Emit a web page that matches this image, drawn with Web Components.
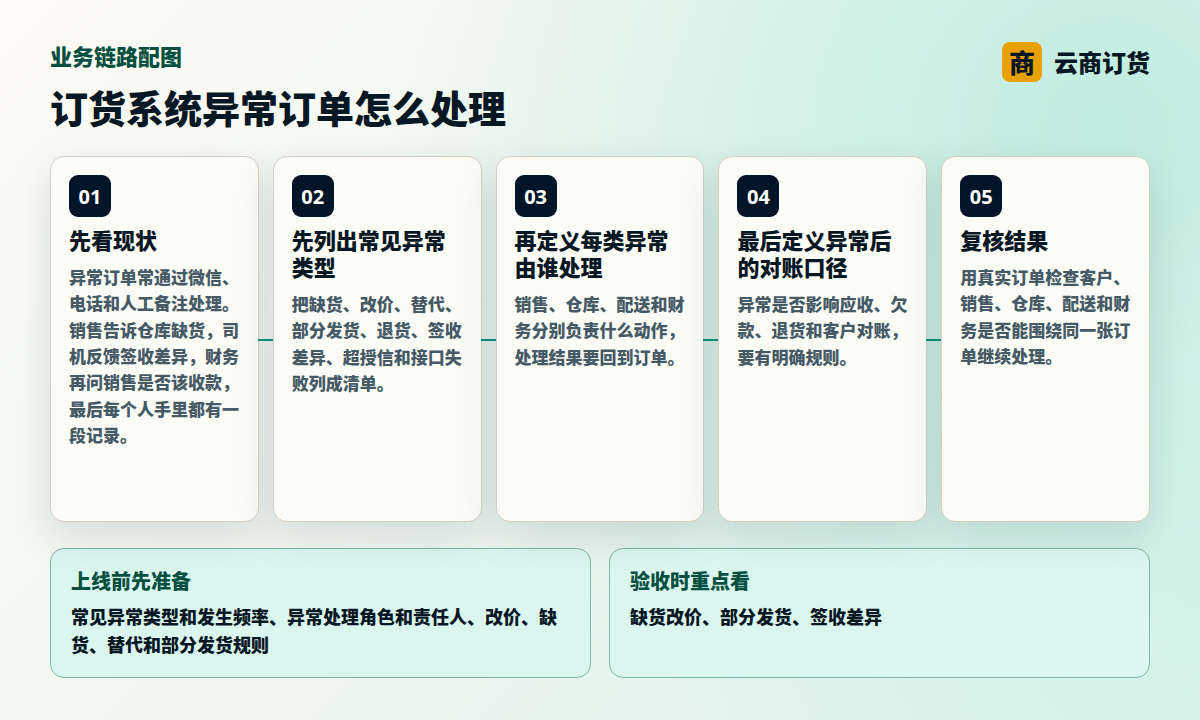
<!DOCTYPE html>
<html lang="zh-CN">
<head>
<meta charset="utf-8">
<title>订货系统异常订单怎么处理</title>
<style>
html, body { margin: 0; height: 100%; }
body { width: 1200px; height: 720px; overflow: hidden; font-family: "Open Sans", "Noto Sans CJK SC", sans-serif; }
</style>
</head>
<body>
<slide-page>
  <slide-header slot="header" label="业务链路配图" heading="订货系统异常订单怎么处理" brand="云商订货" mark="商"></slide-header>
  <step-card no="01" heading="先看现状" link>异常订单常通过微信、电话和人工备注处理。销售告诉仓库缺货，司机反馈签收差异，财务再问销售是否该收款，最后每个人手里都有一段记录。</step-card>
  <step-card no="02" heading="先列出常见异常类型" link>把缺货、改价、替代、部分发货、退货、签收差异、超授信和接口失败列成清单。</step-card>
  <step-card no="03" heading="再定义每类异常由谁处理" link>销售、仓库、配送和财务分别负责什么动作，处理结果要回到订单。</step-card>
  <step-card no="04" heading="最后定义异常后的对账口径" link>异常是否影响应收、欠款、退货和客户对账，要有明确规则。</step-card>
  <step-card no="05" heading="复核结果">用真实订单检查客户、销售、仓库、配送和财务是否能围绕同一张订单继续处理。</step-card>
  <note-card slot="notes" heading="上线前先准备">常见异常类型和发生频率、异常处理角色和责任人、改价、缺货、替代和部分发货规则</note-card>
  <note-card slot="notes" heading="验收时重点看">缺货改价、部分发货、签收差异</note-card>
</slide-page>
<script>
class SlidePage extends HTMLElement {
    constructor() {
        super();
        const shadow = this.attachShadow({ mode: "open" });
        shadow.innerHTML = `
        <style>
        :host {
            display: block;
            width: 1200px;
            height: 720px;
            box-sizing: border-box;
            padding: 40px 50px;
            background:
                radial-gradient(circle at 92% 18%, rgba(192, 236, 223, 1) 0, rgba(200, 238, 227, .75) 20%, rgba(220, 243, 236, 0) 58%),
                linear-gradient(135deg, #fdfbf5 0%, #eef6f1 50%, #d9f2ea 100%);
        }
        .steps { display: grid; grid-template-columns: repeat(5, 1fr); gap: 14px; height: 366px; }
        .notes { display: grid; grid-template-columns: 1fr 1fr; gap: 18px; height: 130px; margin-top: 26px; }
        </style>
        <slot name="header"></slot>
        <div class="steps"><slot></slot></div>
        <div class="notes"><slot name="notes"></slot></div>`;
    }
}

class SlideHeader extends HTMLElement {
    constructor() {
        super();
        const shadow = this.attachShadow({ mode: "open" });
        shadow.innerHTML = `
        <style>
        :host { display: flex; justify-content: space-between; align-items: flex-start; height: 116px; }
        .label { font-size: 22px; line-height: 32px; font-weight: 900; color: #07503f; }
        h1 { margin: 8px 0 0; font-size: 38px; line-height: 56px; font-weight: 900; color: #071723; }
        .brand { display: flex; align-items: center; gap: 12px; margin-top: 2px; font-size: 24px; font-weight: 900; color: #071723; }
        .name { padding-bottom: 2px; }
        .mark { width: 40px; height: 40px; border-radius: 8px; background: #e8a100; display: flex; align-items: center; justify-content: center; font-size: 26px; }
        </style>
        <div>
            <div class="label">${this.getAttribute("label")}</div>
            <h1>${this.getAttribute("heading")}</h1>
        </div>
        <div class="brand"><span class="mark">${this.getAttribute("mark")}</span><span class="name">${this.getAttribute("brand")}</span></div>`;
    }
}

class StepCard extends HTMLElement {
    constructor() {
        super();
        const shadow = this.attachShadow({ mode: "open" });
        shadow.innerHTML = `
        <style>
        :host {
            display: block;
            position: relative;
            box-sizing: border-box;
            padding: 18px;
            border: 1px solid #d5cdbf;
            border-radius: 14px;
            background: #fcfcf7;
            box-shadow: 0 14px 40px rgba(7, 40, 50, .13);
        }
        :host([link])::after {
            content: "";
            position: absolute;
            left: 100%;
            top: 182px;
            width: 15px;
            height: 2px;
            background: #0b8f7a;
        }
        .no {
            width: 42px;
            height: 42px;
            border-radius: 9px;
            background: #021528;
            color: #fff;
            display: flex;
            align-items: center;
            justify-content: center;
            font-size: 20px;
            font-weight: 700;
        }
        h2 { margin: 10px 0 0; font-size: 22px; line-height: 27px; font-weight: 900; color: #071723; }
        .body { margin-top: 11px; font-size: 17px; line-height: 26.35px; font-weight: 900; color: #465a66; }
        </style>
        <div class="no">${this.getAttribute("no")}</div>
        <h2>${this.getAttribute("heading")}</h2>
        <div class="body"><slot></slot></div>`;
    }
}

class NoteCard extends HTMLElement {
    constructor() {
        super();
        const shadow = this.attachShadow({ mode: "open" });
        shadow.innerHTML = `
        <style>
        :host {
            display: block;
            box-sizing: border-box;
            padding: 19px 20px 10px;
            border: 1px solid #80b3a5;
            border-radius: 14px;
            background: #dbf6ef;
        }
        h3 { margin: 0; font-size: 20px; line-height: 28px; font-weight: 900; color: #07503f; }
        .body { margin-top: 8px; font-size: 18px; line-height: 27.9px; font-weight: 900; color: #071723; }
        </style>
        <h3>${this.getAttribute("heading")}</h3>
        <div class="body"><slot></slot></div>`;
    }
}

customElements.define("slide-page", SlidePage);
customElements.define("slide-header", SlideHeader);
customElements.define("step-card", StepCard);
customElements.define("note-card", NoteCard);
</script>
</body>
</html>
